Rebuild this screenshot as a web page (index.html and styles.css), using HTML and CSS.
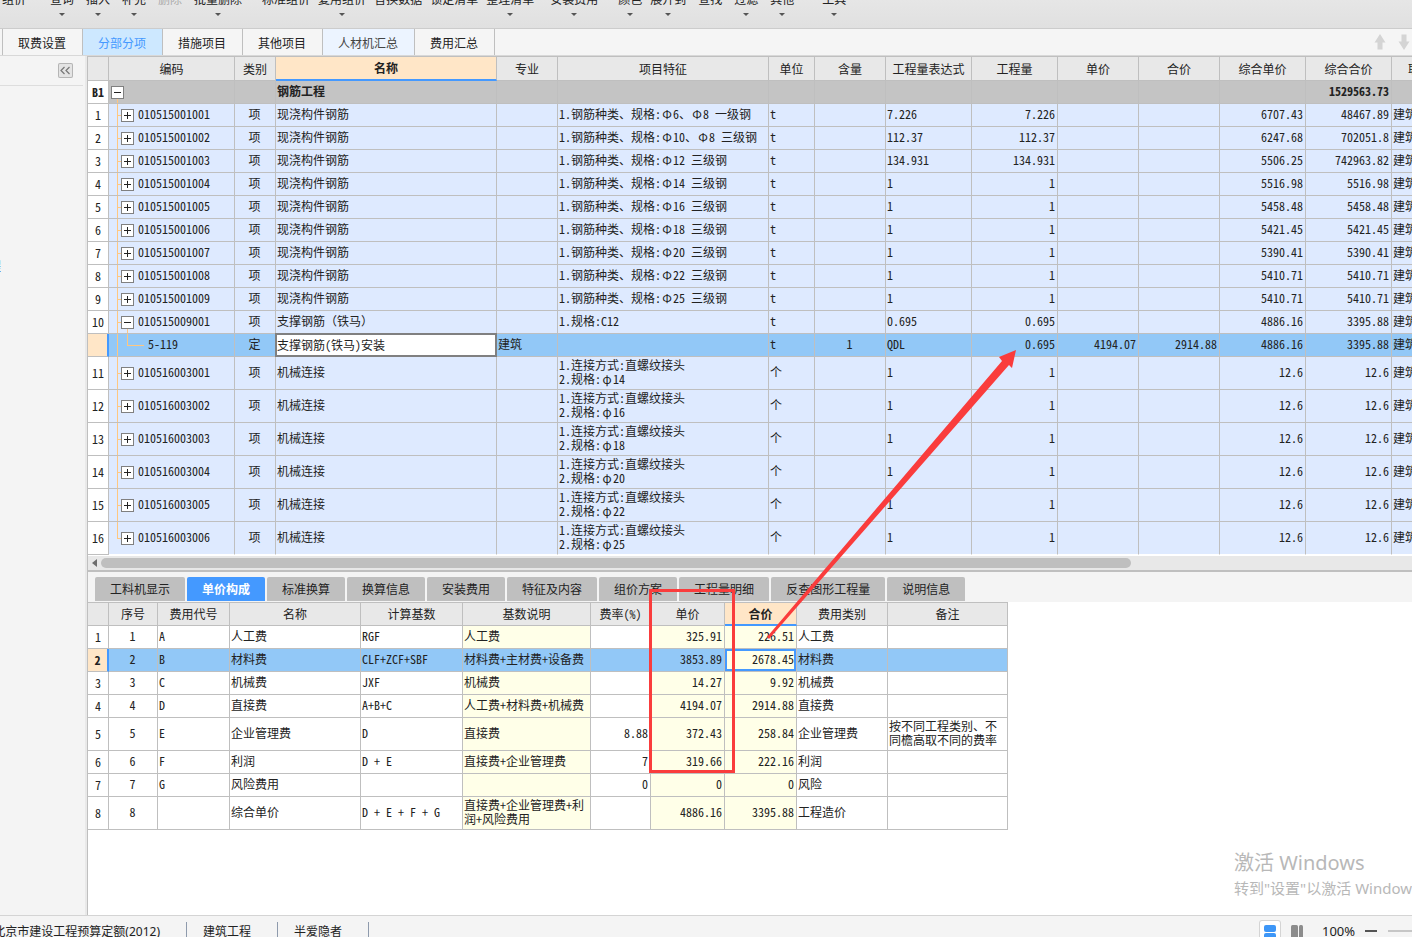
FILE: index.html
```html
<!DOCTYPE html>
<html lang="zh-CN">
<head>
<meta charset="utf-8">
<title>分部分项</title>
<link rel="stylesheet" href="styles.css">
</head>
<body>
<div class="app">
<header class="toolbar">
<button class="tool">组价</button>
<button class="tool gap-24 menu">查询</button>
<button class="tool gap-12 menu">插入</button>
<button class="tool gap-12 menu">补充</button>
<button class="tool gap-12" disabled>删除</button>
<button class="tool gap-12 menu">批量删除</button>
<button class="tool gap-20">标准组价</button>
<button class="tool gap-8 menu">复用组价</button>
<button class="tool gap-8">替换数据</button>
<button class="tool gap-8">锁定清单</button>
<button class="tool gap-8 menu">整理清单</button>
<button class="tool gap-16 menu">安装费用</button>
<button class="tool gap-20 menu">颜色</button>
<button class="tool gap-8 menu">展开到</button>
<button class="tool gap-12">查找</button>
<button class="tool gap-12 menu">过滤</button>
<button class="tool gap-12 menu">其他</button>
<button class="tool gap-28 menu">工具</button>
</header>
<nav class="tabs">
<button class="tab">取费设置</button>
<button class="tab active">分部分项</button>
<button class="tab">措施项目</button>
<button class="tab">其他项目</button>
<button class="tab hover">人材机汇总</button>
<button class="tab">费用汇总</button>
<span class="movers">
<button class="mover" aria-label="上移"><svg width="12" height="16" viewBox="0 0 12 16"><path d="M6 0 11.500 8.500H8.500V15.500H3.500V8.500H.5z" fill="#d4d4d4"/></svg></button>
<button class="mover" aria-label="下移"><svg width="12" height="16" viewBox="0 0 12 16"><path d="M6 16 11.500 7.500H8.500V.5H3.500V7.500H.5z" fill="#d4d4d4"/></svg></button>
</span>
</nav>
<div class="workspace">
<aside class="side">
<div class="side-head"><button class="collapse" aria-label="收起"><svg width="15" height="15" viewBox="0 0 15 15"><path d="M6.500 4 3 7.500 6.500 11M11.500 4 8 7.500 11.500 11" fill="none" stroke="#777" stroke-width="1.200"/></svg></button></div>
<div class="side-tree"><a href="#">工程</a></div>
</aside>
<main class="main">
<div class="grid-wrap">
<table class="grid bill">
<colgroup><col class="w21"><col class="w126"><col class="w41"><col class="w221"><col class="w61"><col class="w211"><col class="w46"><col class="w71"><col class="w86"><col class="w86"><col class="w81"><col class="w81"><col class="w86"><col class="w86"><col class="w81"></colgroup>
<thead><tr><th></th><th>编码</th><th>类别</th><th class="current">名称</th><th>专业</th><th>项目特征</th><th>单位</th><th>含量</th><th>工程量表达式</th><th>工程量</th><th>单价</th><th>合价</th><th>综合单价</th><th>综合合价</th><th>取费专业</th></tr></thead>
<tbody>
<tr class="section"><td>B1</td><td><button class="fold open" aria-label="收起"></button></td><td></td><td>钢筋工程</td><td></td><td></td><td></td><td></td><td></td><td></td><td></td><td></td><td></td><td>1529563.73</td><td></td></tr>
<tr><td>1</td><td><button class="fold" aria-label="展开"></button>010515001001</td><td>项</td><td>现浇构件钢筋</td><td></td><td>1.钢筋种类、规格:<i>Φ</i>6、<i>Φ</i>8 一级钢</td><td>t</td><td></td><td>7.226</td><td>7.226</td><td></td><td></td><td>6707.43</td><td>48467.89</td><td>建筑工程</td></tr>
<tr><td>2</td><td><button class="fold" aria-label="展开"></button>010515001002</td><td>项</td><td>现浇构件钢筋</td><td></td><td>1.钢筋种类、规格:<i>Φ</i>10、<i>Φ</i>8 三级钢</td><td>t</td><td></td><td>112.37</td><td>112.37</td><td></td><td></td><td>6247.68</td><td>702051.8</td><td>建筑工程</td></tr>
<tr><td>3</td><td><button class="fold" aria-label="展开"></button>010515001003</td><td>项</td><td>现浇构件钢筋</td><td></td><td>1.钢筋种类、规格:<i>Φ</i>12 三级钢</td><td>t</td><td></td><td>134.931</td><td>134.931</td><td></td><td></td><td>5506.25</td><td>742963.82</td><td>建筑工程</td></tr>
<tr><td>4</td><td><button class="fold" aria-label="展开"></button>010515001004</td><td>项</td><td>现浇构件钢筋</td><td></td><td>1.钢筋种类、规格:<i>Φ</i>14 三级钢</td><td>t</td><td></td><td>1</td><td>1</td><td></td><td></td><td>5516.98</td><td>5516.98</td><td>建筑工程</td></tr>
<tr><td>5</td><td><button class="fold" aria-label="展开"></button>010515001005</td><td>项</td><td>现浇构件钢筋</td><td></td><td>1.钢筋种类、规格:<i>Φ</i>16 三级钢</td><td>t</td><td></td><td>1</td><td>1</td><td></td><td></td><td>5458.48</td><td>5458.48</td><td>建筑工程</td></tr>
<tr><td>6</td><td><button class="fold" aria-label="展开"></button>010515001006</td><td>项</td><td>现浇构件钢筋</td><td></td><td>1.钢筋种类、规格:<i>Φ</i>18 三级钢</td><td>t</td><td></td><td>1</td><td>1</td><td></td><td></td><td>5421.45</td><td>5421.45</td><td>建筑工程</td></tr>
<tr><td>7</td><td><button class="fold" aria-label="展开"></button>010515001007</td><td>项</td><td>现浇构件钢筋</td><td></td><td>1.钢筋种类、规格:<i>Φ</i>20 三级钢</td><td>t</td><td></td><td>1</td><td>1</td><td></td><td></td><td>5390.41</td><td>5390.41</td><td>建筑工程</td></tr>
<tr><td>8</td><td><button class="fold" aria-label="展开"></button>010515001008</td><td>项</td><td>现浇构件钢筋</td><td></td><td>1.钢筋种类、规格:<i>Φ</i>22 三级钢</td><td>t</td><td></td><td>1</td><td>1</td><td></td><td></td><td>5410.71</td><td>5410.71</td><td>建筑工程</td></tr>
<tr><td>9</td><td><button class="fold" aria-label="展开"></button>010515001009</td><td>项</td><td>现浇构件钢筋</td><td></td><td>1.钢筋种类、规格:<i>Φ</i>25 三级钢</td><td>t</td><td></td><td>1</td><td>1</td><td></td><td></td><td>5410.71</td><td>5410.71</td><td>建筑工程</td></tr>
<tr class="parent"><td>10</td><td><button class="fold open" aria-label="收起"></button>010515009001</td><td>项</td><td>支撑钢筋（铁马）</td><td></td><td>1.规格:C12</td><td>t</td><td></td><td>0.695</td><td>0.695</td><td></td><td></td><td>4886.16</td><td>3395.88</td><td>建筑工程</td></tr>
<tr class="child selected"><td></td><td>5-119</td><td>定</td><td class="editing"><input class="cell-input" aria-label="名称" value="支撑钢筋(铁马)安装"></td><td>建筑</td><td></td><td>t</td><td>1</td><td>QDL</td><td>0.695</td><td>4194.07</td><td>2914.88</td><td>4886.16</td><td>3395.88</td><td>建筑工程</td></tr>
<tr class="tall"><td>11</td><td><button class="fold" aria-label="展开"></button>010516003001</td><td>项</td><td>机械连接</td><td></td><td>1.连接方式:直螺纹接头<br>2.规格:<i>φ</i>14</td><td>个</td><td></td><td>1</td><td>1</td><td></td><td></td><td>12.6</td><td>12.6</td><td>建筑工程</td></tr>
<tr class="tall"><td>12</td><td><button class="fold" aria-label="展开"></button>010516003002</td><td>项</td><td>机械连接</td><td></td><td>1.连接方式:直螺纹接头<br>2.规格:<i>φ</i>16</td><td>个</td><td></td><td>1</td><td>1</td><td></td><td></td><td>12.6</td><td>12.6</td><td>建筑工程</td></tr>
<tr class="tall"><td>13</td><td><button class="fold" aria-label="展开"></button>010516003003</td><td>项</td><td>机械连接</td><td></td><td>1.连接方式:直螺纹接头<br>2.规格:<i>φ</i>18</td><td>个</td><td></td><td>1</td><td>1</td><td></td><td></td><td>12.6</td><td>12.6</td><td>建筑工程</td></tr>
<tr class="tall"><td>14</td><td><button class="fold" aria-label="展开"></button>010516003004</td><td>项</td><td>机械连接</td><td></td><td>1.连接方式:直螺纹接头<br>2.规格:<i>φ</i>20</td><td>个</td><td></td><td>1</td><td>1</td><td></td><td></td><td>12.6</td><td>12.6</td><td>建筑工程</td></tr>
<tr class="tall"><td>15</td><td><button class="fold" aria-label="展开"></button>010516003005</td><td>项</td><td>机械连接</td><td></td><td>1.连接方式:直螺纹接头<br>2.规格:<i>φ</i>22</td><td>个</td><td></td><td>1</td><td>1</td><td></td><td></td><td>12.6</td><td>12.6</td><td>建筑工程</td></tr>
<tr class="tall last"><td>16</td><td><button class="fold" aria-label="展开"></button>010516003006</td><td>项</td><td>机械连接</td><td></td><td>1.连接方式:直螺纹接头<br>2.规格:<i>φ</i>25</td><td>个</td><td></td><td>1</td><td>1</td><td></td><td></td><td>12.6</td><td>12.6</td><td>建筑工程</td></tr>
</tbody>
</table>
</div>
<div class="scrollbar"><svg width="5" height="8" viewBox="0 0 5 8"><path d="M5 0V8L0 4z" fill="#6e6e6e"/></svg><span class="thumb"></span></div>
<nav class="subtabs">
<button class="subtab">工料机显示</button>
<button class="subtab active">单价构成</button>
<button class="subtab">标准换算</button>
<button class="subtab">换算信息</button>
<button class="subtab">安装费用</button>
<button class="subtab">特征及内容</button>
<button class="subtab">组价方案</button>
<button class="subtab">工程量明细</button>
<button class="subtab">反查图形工程量</button>
<button class="subtab">说明信息</button>
</nav>
<div class="detail">
<table class="grid price">
<colgroup><col class="w21"><col class="w49"><col class="w72"><col class="w131"><col class="w102"><col class="w128"><col class="w60"><col class="w74"><col class="w72"><col class="w91"><col class="w120"></colgroup>
<thead><tr><th></th><th>序号</th><th>费用代号</th><th>名称</th><th>计算基数</th><th>基数说明</th><th>费率(%)</th><th>单价</th><th class="current">合价</th><th>费用类别</th><th>备注</th></tr></thead>
<tbody>
<tr><td>1</td><td>1</td><td>A</td><td>人工费</td><td>RGF</td><td>人工费</td><td></td><td>325.91</td><td>226.51</td><td>人工费</td><td></td></tr>
<tr class="selected"><td>2</td><td>2</td><td>B</td><td>材料费</td><td>CLF+ZCF+SBF</td><td>材料费+主材费+设备费</td><td></td><td>3853.89</td><td class="focus">2678.45</td><td>材料费</td><td></td></tr>
<tr><td>3</td><td>3</td><td>C</td><td>机械费</td><td>JXF</td><td>机械费</td><td></td><td>14.27</td><td>9.92</td><td>机械费</td><td></td></tr>
<tr><td>4</td><td>4</td><td>D</td><td>直接费</td><td>A+B+C</td><td>人工费+材料费+机械费</td><td></td><td>4194.07</td><td>2914.88</td><td>直接费</td><td></td></tr>
<tr class="tall"><td>5</td><td>5</td><td>E</td><td>企业管理费</td><td>D</td><td>直接费</td><td>8.88</td><td>372.43</td><td>258.84</td><td>企业管理费</td><td>按不同工程类别、不<br>同檐高取不同的费率</td></tr>
<tr><td>6</td><td>6</td><td>F</td><td>利润</td><td>D + E</td><td>直接费+企业管理费</td><td>7</td><td>319.66</td><td>222.16</td><td>利润</td><td></td></tr>
<tr><td>7</td><td>7</td><td>G</td><td>风险费用</td><td></td><td></td><td>0</td><td>0</td><td>0</td><td>风险</td><td></td></tr>
<tr class="tall"><td>8</td><td>8</td><td></td><td>综合单价</td><td>D + E + F + G</td><td>直接费+企业管理费+利<br>润+风险费用</td><td></td><td>4886.16</td><td>3395.88</td><td>工程造价</td><td></td></tr>
</tbody>
</table>
</div>
</main>
</div>
<footer class="status">
<span class="status-item lead">北京市建设工程预算定额(2012)</span>
<span class="status-item">建筑工程</span>
<span class="status-item">半爱隐者</span>
<span class="status-tools">
<button class="view on" aria-label="上下布局"><svg width="12" height="14" viewBox="0 0 12 14"><rect width="12" height="7" rx="2" fill="#3d96f7"/><rect y="8" width="12" height="6" rx="2" fill="#3d96f7"/></svg></button>
<button class="view" aria-label="左右布局"><svg width="12" height="14" viewBox="0 0 12 14"><rect width="7" height="13" rx="1.500" fill="#8c8c8c"/><rect x="8" width="4" height="13" rx="1.500" fill="#8c8c8c"/></svg></button>
<span class="zoom">100%</span>
<button class="minus" aria-label="缩小"></button>
<input class="slider" type="range" aria-label="缩放" value="50">
</span>
</footer>
<div class="watermark"><p class="wm-title">激活 Windows</p><p class="wm-text">转到"设置"以激活 Windows。</p></div>
<svg class="markup" width="1100" height="800" viewBox="0 0 1100 800"><rect x="650.500" y="590.500" width="83" height="181" fill="none" stroke="#fa3c3c" stroke-width="3"/><path d="M767 637 1002 361 999 357 1016 350 1012 368 1009 365 769 639z" fill="#fa3c3c"/></svg>
</div>
</body>
</html>
```

FILE: styles.css
```css
* { box-sizing: border-box; }
html, body { height: 100%; margin: 0; }
body { font: 12px/14px "Noto Sans", "Noto Sans CJK SC", sans-serif; color: #222; background: #f4f4f4; }
button, input { font: inherit; color: inherit; margin: 0; padding: 0; border: 0; background: none; }
a { color: #1a5fd0; text-decoration: none; }
svg { display: block; }
.app { position: relative; display: flex; flex-direction: column; height: 100vh; overflow: hidden; }

.toolbar { flex: none; display: flex; align-items: flex-start; height: 29px; padding-left: 2px; overflow: hidden; background: linear-gradient(#e6e6e6, #e0e0e0); border-bottom: 1px solid #ccc; }
.tool { flex: none; display: flex; flex-direction: column; align-items: center; gap: 7px; margin-top: -8px; white-space: nowrap; font-family: "Noto Sans CJK SC", sans-serif; }
.tool:disabled { color: #aaa; }
.menu::after { content: ""; border: 3px solid transparent; border-top-color: #555; border-bottom: 0; }
.gap-8 { margin-left: 8px; }
.gap-12 { margin-left: 12px; }
.gap-16 { margin-left: 16px; }
.gap-20 { margin-left: 20px; }
.gap-24 { margin-left: 24px; }
.gap-28 { margin-left: 28px; }

.tabs { flex: none; display: flex; height: 27px; padding-left: 2px; border-bottom: 1px solid #d8d8d8; background: #f5f5f5; font-family: "Noto Sans CJK SC", sans-serif; }
.tab { padding: 2px 16px 0 15px; border-right: 1px solid #bfbfbf; }
.tab:first-child { border-left: 1px solid #bfbfbf; }
.tab.active { color: #4499ff; background: #cde8ff; }
.tab.hover { background: #ecf4ff; color: #444; }
.movers { flex: none; display: flex; gap: 12px; align-items: center; margin-left: auto; margin-right: 2px; }

.workspace { flex: 1; min-height: 0; display: flex; }
.side { flex: none; width: 87px; border-right: 2px solid #e9e9e9; }
.side-head { display: flex; justify-content: flex-end; height: 30px; margin-right: 2px; padding: 7px 10px 0 0; border-bottom: 1px solid #ddd; }
.collapse { width: 15px; height: 15px; border-radius: 2px; background: #e4e4e4; box-shadow: inset 0 0 0 1px #b5b5b5; }
.side-tree { display: flex; justify-content: flex-end; width: 1px; margin-top: 174px; overflow: hidden; white-space: nowrap; }
.main { flex: 1; min-width: 0; display: flex; flex-direction: column; border-left: 1px solid #bfbfbf; background: #fff; }

.grid-wrap { flex: none; overflow: hidden; }
.grid { table-layout: fixed; border-collapse: separate; border-spacing: 0; font-family: "Noto Sans Mono CJK SC", "Liberation Mono", "Noto Sans CJK SC", monospace; }
.bill { width: 1385px; padding-bottom: 1px; }
.price { width: 920px; }
.w21 { width: 21px; } .w41 { width: 41px; } .w46 { width: 46px; } .w49 { width: 49px; } .w60 { width: 60px; } .w61 { width: 61px; }
.w71 { width: 71px; } .w72 { width: 72px; } .w74 { width: 74px; } .w81 { width: 81px; } .w86 { width: 86px; } .w91 { width: 91px; }
.w102 { width: 102px; } .w120 { width: 120px; } .w126 { width: 126px; } .w128 { width: 128px; } .w131 { width: 131px; }
.w211 { width: 211px; } .w221 { width: 221px; }
.grid th, .grid td { height: 23px; padding: 0 2px 2px 1px; border-right: 1px solid #bfbfbf; border-bottom: 1px solid #bfbfbf; white-space: nowrap; overflow: hidden; text-align: left; }
.grid th { height: 24px; padding: 0; font-weight: 400; text-align: center; background: #e8e8e8; border-top: 1px solid #bfbfbf; }
.bill th { height: 25px; }
.grid th.current { font-weight: 700; background: #ffe6c7; border-bottom: 2px solid #4499ff; }
.grid .tall td { height: 33px; }
.grid i { display: inline-block; width: 12px; text-align: center; font-style: normal; }
.grid td:first-child { padding: 0; text-align: center; background: #fff; }

.bill td { background: #deeaff; }
.bill td:nth-child(3), .bill td:nth-child(8) { text-align: center; }
.bill td:nth-child(n+10):nth-child(-n+14) { text-align: right; }
.bill td:nth-child(2) { padding-left: 12px; background: linear-gradient(#ffc780, #ffc780) 8px 0 / 1px 100% no-repeat, linear-gradient(#ffc780, #ffc780) 8px 50% / 4px 1px no-repeat, #deeaff; }
.bill .last td:nth-child(2) { background-size: 1px 50%, 4px 1px, auto; }
.bill .last td:nth-child(n+2) { border-bottom-color: #fff; }
.bill .section td { font-weight: 700; background: #c4c4c4; border-bottom-color: #bfbfbf; }
.bill .section td:first-child { background: #fff; }
.bill .section td:nth-child(2) { padding-left: 2px; background: linear-gradient(#ffc780, #ffc780) 8px 16px / 1px 8px no-repeat, #c4c4c4; }
.bill .parent td:nth-child(2) { background: linear-gradient(#ffc780, #ffc780) 8px 0 / 1px 100% no-repeat, linear-gradient(#ffc780, #ffc780) 8px 50% / 4px 1px no-repeat, linear-gradient(#ffc780, #ffc780) 18px 16px / 1px 8px no-repeat, #deeaff; }
.grid .selected td { background: #92c8f7; }
.grid .selected td:first-child { background: #ffe6c7; border-right: 2px solid #4499ff; font-weight: 700; }
.bill .child td:nth-child(2) { padding-left: 39px; background: linear-gradient(#ffc780, #ffc780) 8px 0 / 1px 100% no-repeat, linear-gradient(#ffc780, #ffc780) 18px 0 / 1px 11px no-repeat, linear-gradient(#ffc780, #ffc780) 18px 50% / 17px 1px no-repeat, #92c8f7; }
.grid td.editing { padding: 0; overflow: visible; }
.cell-input { display: block; width: 100%; height: 22px; padding: 0 2px 2px 1px; background: #fff; outline: 2px solid #808080; outline-offset: -1px; }

.fold { display: inline-block; width: 13px; height: 13px; margin-right: 4px; vertical-align: -2px; border: 1px solid #808080; background: linear-gradient(#222, #222) 50% 50% / 7px 1px no-repeat, linear-gradient(#222, #222) 50% 50% / 1px 7px no-repeat, #fff; }
.fold.open { background: linear-gradient(#222, #222) 50% 50% / 7px 1px no-repeat, #fff; }

.scrollbar { flex: none; display: flex; align-items: center; gap: 4px; height: 16px; padding-left: 4px; background: #e8e8e8; border-bottom: 2px solid #bfbfbf; }
.thumb { width: 78%; height: 10px; border-radius: 5px; background: #bfbfbf; }
.subtabs { flex: none; display: flex; gap: 2px; height: 30px; padding: 5px 0 0 7px; background: #f4f4f4; font-family: "Noto Sans CJK SC", sans-serif; }
.subtab { height: 24px; padding: 0 15px; border-radius: 2px 2px 0 0; background: #bfbfbf; }
.subtab.active { color: #fff; font-weight: 700; background: #4499ff; }
.detail { flex: 1; min-height: 0; }

.price td:nth-child(2) { text-align: center; }
.price td:nth-child(7), .price td:nth-child(8), .price td:nth-child(9) { text-align: right; }
.price td:nth-child(6), .price td:nth-child(8), .price td:nth-child(9) { background: #ffffe8; }
.price .selected td:nth-child(6), .price .selected td:nth-child(8) { background: #92c8f7; }
.price .selected td.focus { background: #ffffe8; box-shadow: inset 0 0 0 2px #4499ff; }

.status { flex: none; display: flex; height: 22px; overflow: hidden; background: #f4f4f4; border-top: 1px solid #d4d4d4; font-family: "Noto Sans", "Noto Sans CJK SC", sans-serif; }
.status-item { display: flex; align-items: flex-start; height: 16px; margin-top: 6px; padding: 3px 26px 0 16px; border-right: 1px solid #8e9aac; white-space: nowrap; }
.status-item.lead { width: 187px; justify-content: flex-end; }
.status-tools { flex: none; display: flex; align-items: flex-start; margin-left: auto; margin-right: -76px; }
.view { width: 22px; height: 24px; margin-top: 4px; padding: 5px; }
.view + .view { margin-left: 5px; }
.view.on { background: #fff; border-radius: 3px; box-shadow: inset 0 0 0 1px #d4d4d4; }
.zoom { width: 43px; margin: 8px 0 0 14px; font-size: 13px; }
.minus { width: 12px; height: 2px; margin: 14px 11px 0 0; background: #555; }
.slider { width: 100px; height: 2px; margin-top: 14px; appearance: none; background: #c6c6c6; }

.watermark { position: absolute; right: 0; bottom: 37px; width: 178px; overflow: hidden; white-space: nowrap; color: #b8b8b8; }
.watermark p { margin: 0; }
.wm-title { font-size: 20px; line-height: 26px; }
.wm-text { font-size: 15px; line-height: 24px; }
.markup { position: absolute; left: 0; top: 0; pointer-events: none; }
```
